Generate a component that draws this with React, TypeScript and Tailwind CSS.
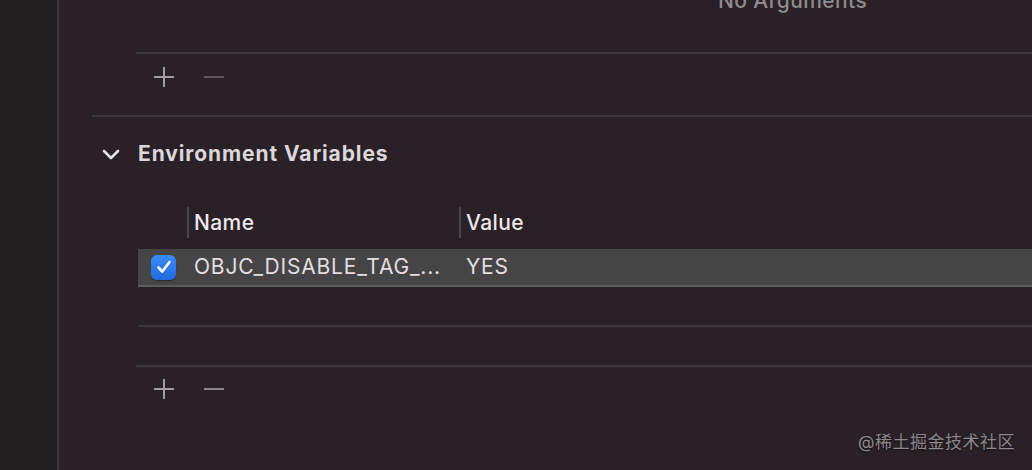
const font = { fontFamily: "Inter, 'Noto Sans CJK SC', sans-serif" };

const Plus = () => (
  <svg width="22" height="22" viewBox="0 0 22 22" className="text-[#a09ca0]">
    <path d="M11 1v20M1 11h20" stroke="currentColor" strokeWidth="2" />
  </svg>
);

const Minus = ({ dim }: { dim?: boolean }) => (
  <svg
    width="22"
    height="22"
    viewBox="0 0 22 22"
    className={dim ? "text-[#5f585d]" : "text-[#8a858a]"}
  >
    <path d="M1 11h20" stroke="currentColor" strokeWidth="2" />
  </svg>
);

const Line = ({ ml }: { ml: string }) => (
  <div className={`h-[2px] bg-[#3b383b] ${ml}`} />
);

const Checkbox = () => (
  <div className="flex h-[25px] w-[25px] items-center justify-center rounded-[6px] bg-gradient-to-b from-[#3b8cf7] to-[#2269e0] shadow-[0_1px_1px_rgba(0,0,0,0.4)]">
    <svg width="16" height="16" viewBox="0 0 16 16">
      <path
        d="M2.5 8.5l3.8 4L13.5 3"
        fill="none"
        stroke="white"
        strokeWidth="2.6"
        strokeLinecap="round"
        strokeLinejoin="round"
      />
    </svg>
  </div>
);

const App = () => {
  return (
    <div
      className="relative flex h-[470px] w-[1032px] overflow-hidden bg-[#292125]"
      style={font}
    >
      <aside className="w-[59px] shrink-0 border-r-2 border-[#3b383b] bg-[#231f21]" />

      <main className="flex flex-1 flex-col">
        {/* previous section, scrolled off the top */}
        <div className="h-[52px] pl-[659px]">
          <div className="-mt-[15px] text-[21px] font-medium tracking-[0.4px] text-[#8f8a8e]">
            No Arguments
          </div>
        </div>
        <Line ml="ml-[77px]" />
        <div className="flex h-[46px] items-center gap-[28px] pl-[94px]">
          <Plus />
          <Minus dim />
        </div>
        <div className="mt-[15px]">
          <Line ml="ml-[33px]" />
        </div>

        {/* Environment Variables */}
        <div className="flex h-[74px] items-center pl-[42px]">
          <svg width="20" height="12" viewBox="0 0 20 12" className="text-[#e6e2e5]">
            <path
              d="M3 3l7 7 7-7"
              fill="none"
              stroke="currentColor"
              strokeWidth="2.6"
              strokeLinecap="round"
              strokeLinejoin="round"
            />
          </svg>
          <span className="ml-[17px] text-[21px] font-bold tracking-[0.9px] text-[#dcd7db]">
            Environment Variables
          </span>
        </div>

        <div className="ml-[79px]">
          <div className="mt-[16px] flex h-[31px] items-center text-[21px] font-medium tracking-[0.4px] text-[#ece8eb]">
            <div className="w-[49px]" />
            <div className="flex h-full w-[272px] items-center border-l-2 border-[#4a464a] pl-[5px]">
              Name
            </div>
            <div className="flex h-full items-center border-l-2 border-[#4a464a] pl-[5px]">
              Value
            </div>
          </div>

          <div className="mt-[11px] flex h-[38px] items-center border-b-2 border-[#5c5b5c] bg-[#464546] text-[21px] tracking-[0.8px] text-[#e2dfe1]">
            <div className="flex w-[51px] items-center pl-[13px]">
              <Checkbox />
            </div>
            <div className="w-[272px] pl-[5px]">OBJC_DISABLE_TAG_...</div>
            <div className="pl-[5px]">YES</div>
          </div>
          <div className="h-[38px]" />
          <Line ml="ml-0" />
        </div>
        <div className="h-[38px]" />
        <Line ml="ml-[77px]" />
        <div className="flex h-[44px] items-center gap-[28px] pl-[94px]">
          <Plus />
          <Minus />
        </div>
      </main>

      <div className="absolute right-[17px] top-[430px] text-[17px] tracking-[0.5px] text-[#8d888c] [text-shadow:0_1px_2px_rgba(0,0,0,0.6)]">
        @稀土掘金技术社区
      </div>
    </div>
  );
};

export default App;
